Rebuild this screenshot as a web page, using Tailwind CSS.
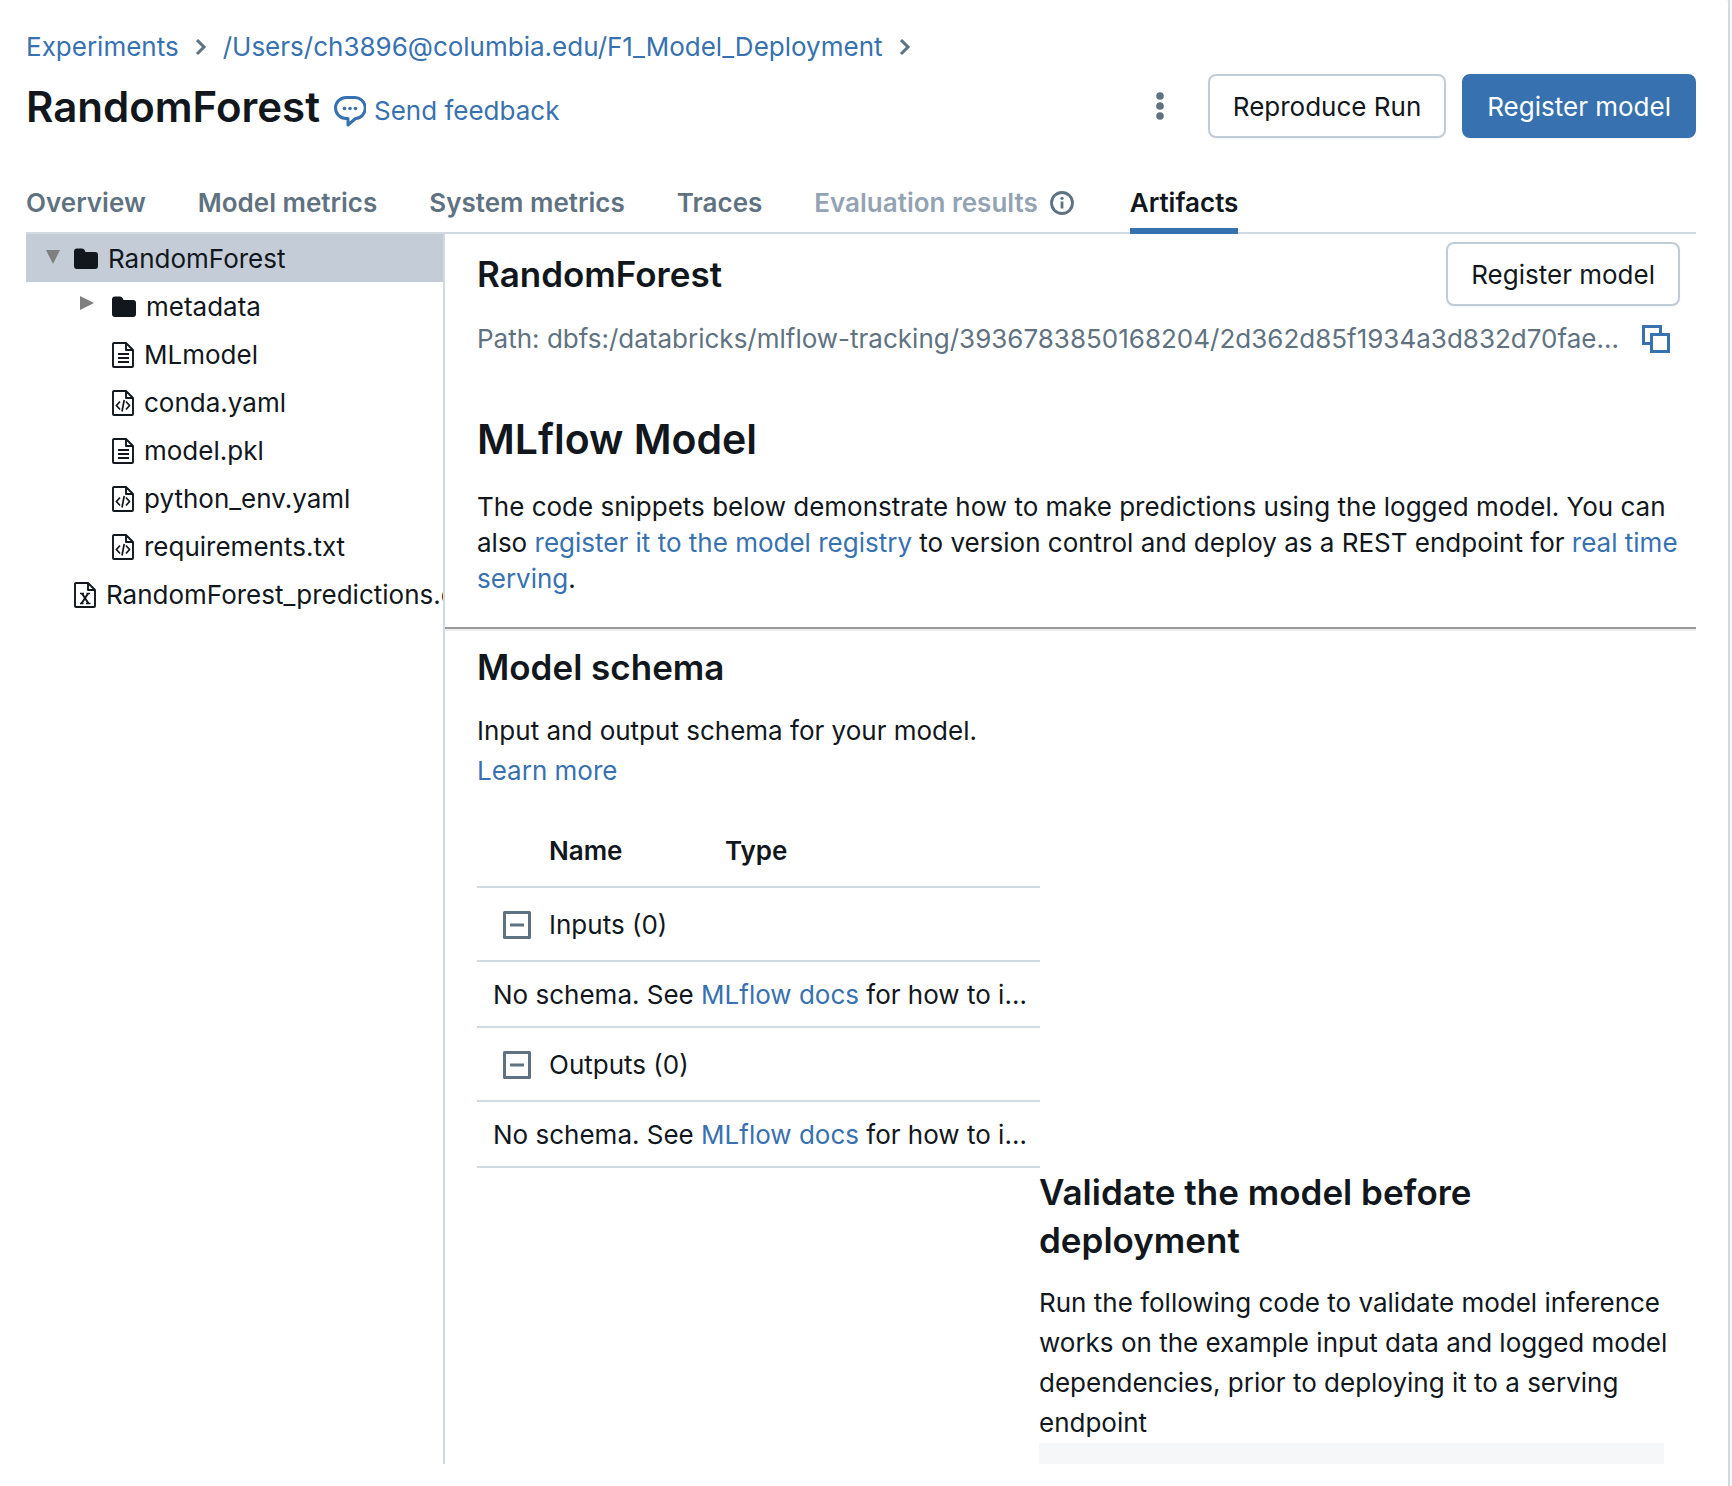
<!DOCTYPE html>
<html lang="en">
<head>
<meta charset="utf-8">
<title>RandomForest - Artifacts</title>
<script src="https://cdn.jsdelivr.net/npm/@tailwindcss/browser@4"></script>
</head>
<body class="h-screen overflow-hidden bg-[#f6f8fa] font-[Inter,sans-serif] text-[26px] leading-10 text-[#11171c]">
<svg class="hidden" aria-hidden="true">
  <symbol id="chevron" viewBox="0 0 12 18"><path d="M2 2l7 7-7 7" fill="none" stroke="#5f7281" stroke-width="3"/></symbol>
  <symbol id="folder" viewBox="0 0 24 22"><path d="M0 3.500a3 3 0 0 1 3-3h5a3 3 0 0 1 2.600 1.500l.9 2H21a3 3 0 0 1 3 3v11a3 3 0 0 1-3 3H3a3 3 0 0 1-3-3z" fill="#11171c"/></symbol>
  <symbol id="page" viewBox="0 0 22 26"><path d="M2 1h12l7 7v16a1 1 0 0 1-1 1H2a1 1 0 0 1-1-1V2a1 1 0 0 1 1-1zM14 1v7h7" fill="none" stroke="#11171c" stroke-width="1.900" stroke-linejoin="round"/></symbol>
  <symbol id="file-text" viewBox="0 0 22 26"><use href="#page"/><path d="M6 12h11M6 16h11M6 20h11" stroke="#11171c" stroke-width="1.800"/></symbol>
  <symbol id="file-code" viewBox="0 0 22 26"><use href="#page"/><path d="M8 11.500l-3.500 4L8 19.500M14 11.500l3.500 4-3.500 4M12.200 10L10 21.500" fill="none" stroke="#11171c" stroke-width="1.700"/></symbol>
  <symbol id="file-sheet" viewBox="0 0 22 26"><use href="#page"/><path d="M8 11.500l6.500 10M14 11.500l-6.500 10" stroke="#11171c" stroke-width="2"/><path d="M6 11.500h4M12.500 11.500h3.500M6 21.500h3.500M12 21.500h4.500" stroke="#11171c" stroke-width="1.500"/></symbol>
  <symbol id="collapse" viewBox="0 0 28 28"><path d="M1.500 1.500h25v25h-25zM7 14h14" fill="none" stroke="#5f7281" stroke-width="3" stroke-linejoin="round"/></symbol>
</svg>

<div class="mr-0.5 -mt-4 flex h-[calc(100%+32px)] flex-col rounded-tr-[20px] border-r-2 border-[#d1d9e1] bg-white pt-4 pr-8 pb-[38px] pl-[26px]">
  <nav aria-label="Breadcrumb" class="mt-[29px] flex h-9 shrink-0 items-center gap-4 text-[#3871b0]">
    <a href="#">Experiments</a>
    <svg class="h-[18px] w-3"><use href="#chevron"/></svg>
    <a href="#">/Users/ch3896@columbia.edu/F1_Model_Deployment</a>
    <svg class="h-[18px] w-3"><use href="#chevron"/></svg>
  </nav>

  <header class="mt-[9px] flex h-16 shrink-0 items-center">
    <h1 class="pt-0.5 text-[42px] font-semibold">RandomForest</h1>
    <a href="#" class="ml-[14px] flex items-center gap-2 pt-[10px] text-[#3871b0]">
      <svg class="h-8 w-8" viewBox="0 0 32 32"><path d="M12 2.500h8a10.500 10.500 0 0 1 1.500 21l-7.500 6.500v-6.500h-2a10.500 10.500 0 0 1 0-21z" fill="none" stroke="#3871b0" stroke-width="3" stroke-linejoin="round"/><g fill="#3871b0"><circle cx="10.500" cy="13.500" r="1.800"/><circle cx="16" cy="13.500" r="1.800"/><circle cx="21.500" cy="13.500" r="1.800"/></g></svg>
      <span>Send feedback</span>
    </a>
    <div class="ml-auto flex items-center gap-4">
      <button type="button" aria-label="More actions" class="flex h-16 w-16 items-center justify-center">
        <svg class="h-7 w-2" viewBox="0 0 8 28" fill="#5f7281"><circle cx="4" cy="4" r="3.800"/><circle cx="4" cy="14" r="3.800"/><circle cx="4" cy="24" r="3.800"/></svg>
      </button>
      <button type="button" class="h-16 rounded-lg border-2 border-[#c0cdd8] px-[23px] pt-0.5 shadow-xs">Reproduce Run</button>
      <button type="button" class="h-16 rounded-lg border-2 border-[#3871b0] bg-[#3871b0] px-[23px] pt-0.5 text-white shadow-xs">Register model</button>
    </div>
  </header>

  <nav aria-label="Run sections" class="mt-[34px] flex h-[62px] shrink-0 gap-[52px] border-b-2 border-[#d1d9e1] font-semibold text-[#5f7281]">
    <a href="#" class="pt-[11px]">Overview</a>
    <a href="#" class="pt-[11px]">Model metrics</a>
    <a href="#" class="pt-[11px]">System metrics</a>
    <a href="#" class="pt-[11px]">Traces</a>
    <a href="#" class="flex items-center gap-3 pt-px text-[#93a3b3]">Evaluation results
      <svg class="mr-1 h-6 w-6" viewBox="0 0 24 24"><circle cx="12" cy="12" r="10.500" fill="none" stroke="#5f7281" stroke-width="2.800"/><circle cx="12" cy="7.300" r="1.600" fill="#5f7281"/><path d="M12 10.500v7" stroke="#5f7281" stroke-width="2.800"/></svg>
    </a>
    <a href="#" aria-current="page" class="h-[62px] border-b-6 border-[#3871b0] pt-[11px] text-[#11171c]">Artifacts</a>
  </nav>

  <main class="flex min-h-0 flex-1">
    <aside class="w-[419px] shrink-0 overflow-hidden border-r-2 border-[#d1d9e1] whitespace-nowrap">
      <ul>
        <li>
          <div class="flex h-12 items-center bg-[#c3ccd7] pt-0.5 pl-5">
            <svg class="mb-1 h-[14px] w-[14px]" viewBox="0 0 14 14"><path d="M0 0h14L7 14z" fill="#7f7f7f"/></svg>
            <svg class="ml-[14px] h-[22px] w-6"><use href="#folder"/></svg>
            <span class="ml-[10px]">RandomForest</span>
          </div>
          <ul>
            <li class="flex h-12 items-center pt-0.5 pl-[54px]">
              <svg class="mb-2 h-[14px] w-[14px]" viewBox="0 0 14 14"><path d="M0 0v14l14-7z" fill="#7f7f7f"/></svg>
              <svg class="ml-[18px] h-[22px] w-6"><use href="#folder"/></svg>
              <span class="ml-[10px]">metadata</span>
            </li>
            <li class="flex h-12 items-center gap-[10px] pt-0.5 pl-[86px]"><svg class="h-[26px] w-[22px]"><use href="#file-text"/></svg>MLmodel</li>
            <li class="flex h-12 items-center gap-[10px] pt-0.5 pl-[86px]"><svg class="h-[26px] w-[22px]"><use href="#file-code"/></svg>conda.yaml</li>
            <li class="flex h-12 items-center gap-[10px] pt-0.5 pl-[86px]"><svg class="h-[26px] w-[22px]"><use href="#file-text"/></svg>model.pkl</li>
            <li class="flex h-12 items-center gap-[10px] pt-0.5 pl-[86px]"><svg class="h-[26px] w-[22px]"><use href="#file-code"/></svg>python_env.yaml</li>
            <li class="flex h-12 items-center gap-[10px] pt-0.5 pl-[86px]"><svg class="h-[26px] w-[22px]"><use href="#file-code"/></svg>requirements.txt</li>
          </ul>
        </li>
        <li class="flex h-12 items-center gap-[10px] pt-0.5 pl-12"><svg class="h-[26px] w-[22px] shrink-0"><use href="#file-sheet"/></svg>RandomForest_predictions.csv</li>
      </ul>
    </aside>

    <section class="min-w-0 flex-1 overflow-hidden">
      <div class="flex items-center pt-2 pr-4 pl-8">
        <h2 class="text-[35px] font-semibold">RandomForest</h2>
        <button type="button" class="ml-auto h-16 rounded-lg border-2 border-[#c0cdd8] px-[23px] pt-0.5 shadow-xs">Register model</button>
      </div>
      <div class="mt-[13px] flex items-center pr-[26px] pl-8 text-[#5f7281]">
        <p class="min-w-0 flex-1 truncate pr-2">Path: dbfs:/databricks/mlflow-tracking/3936783850168204/2d362d85f1934a3d832d70fae9c1b7e4/artifacts/RandomForest</p>
        <button type="button" aria-label="Copy path" class="shrink-0"><svg class="h-7 w-7" viewBox="0 0 28 28" fill="none" stroke="#3871b0" stroke-width="3"><path d="M8 18.500H1.500v-17h17V8"/><path d="M9.500 9.500h17v17h-17z"/></svg></button>
      </div>
      <div class="pr-4 pl-8">
        <h2 class="mt-[54px] text-[41px] leading-[52px] font-semibold">MLflow Model</h2>
        <p class="mt-6 leading-9">The code snippets below demonstrate how to make predictions using the logged model. You can also <a href="#" class="text-[#3871b0]">register it to the model registry</a> to version control and deploy as a REST endpoint for <a href="#" class="text-[#3871b0]">real time serving</a>.</p>
      </div>
      <hr class="mt-[30px] h-1 border-t-2 border-b-2 border-t-[#999] border-b-[#eee]">
      <div class="px-8">
        <div class="w-[563px]">
          <h3 class="mt-3 text-[35px] leading-12 font-semibold">Model schema</h3>
          <p class="mt-5">Input and output schema for your model.</p>
          <a href="#" class="text-[#3871b0]">Learn more</a>
          <table class="mt-[22px] w-full table-fixed text-left">
            <colgroup><col class="w-[72px]"><col class="w-44"><col></colgroup>
            <thead>
              <tr class="h-[74px] border-b-2 border-[#d1d9e1]"><td></td><th scope="col" class="pt-0.5 font-semibold">Name</th><th scope="col" class="pt-0.5 font-semibold">Type</th></tr>
            </thead>
            <tbody>
              <tr class="h-[74px] border-b-2 border-[#d1d9e1]"><td class="pt-0.5 pl-[26px]"><button type="button" aria-label="Collapse inputs" class="block"><svg class="h-7 w-7"><use href="#collapse"/></svg></button></td><td colspan="2" class="pt-0.5">Inputs (0)</td></tr>
              <tr class="h-[66px] border-b-2 border-[#d1d9e1]"><td colspan="3" class="truncate pt-0.5 pr-1 pl-4">No schema. See <a href="#" class="text-[#3871b0]">MLflow docs</a> for how to include input and output schema with your model.</td></tr>
              <tr class="h-[74px] border-b-2 border-[#d1d9e1]"><td class="pt-0.5 pl-[26px]"><button type="button" aria-label="Collapse outputs" class="block"><svg class="h-7 w-7"><use href="#collapse"/></svg></button></td><td colspan="2" class="pt-0.5">Outputs (0)</td></tr>
              <tr class="h-[66px] border-b-2 border-[#d1d9e1]"><td colspan="3" class="truncate pt-0.5 pr-1 pl-4">No schema. See <a href="#" class="text-[#3871b0]">MLflow docs</a> for how to include input and output schema with your model.</td></tr>
            </tbody>
          </table>
        </div>
        <div class="ml-auto w-[625px]">
          <h3 class="pr-16 text-[35px] leading-12 font-semibold">Validate the model before deployment</h3>
          <p class="-mr-6 mt-[19px]">Run the following code to validate model inference works on the example input data and logged model dependencies, prior to deploying it to a serving endpoint</p>
          <div class="h-40 bg-[#f5f7f9]"></div>
        </div>
      </div>
    </section>
  </main>
</div>
</body>
</html>
